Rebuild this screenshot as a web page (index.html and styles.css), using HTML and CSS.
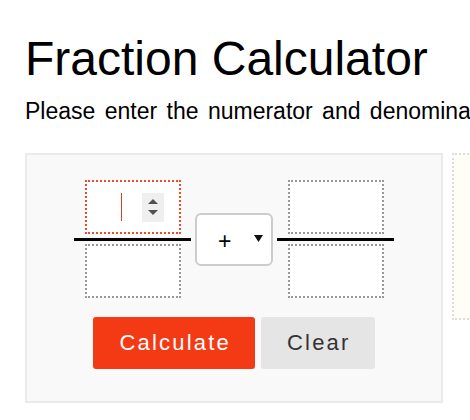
FILE: index.html
```html
<!DOCTYPE html>
<html>
<head>
<meta charset="utf-8">
<title>Fraction Calculator</title>
<link rel="stylesheet" href="styles.css">
</head>
<body>
<div class="page">
  <h1 class="title">Fraction Calculator</h1>
  <p class="intro">Please enter the numerator and denominator of each fraction.</p>
  <div class="layout">
    <div class="panel">
      <div class="equation">
        <div class="fraction">
          <div class="field field-active">
            <span class="caret"></span>
            <span class="spinner">
              <svg width="10" height="16" viewBox="0 0 10 16"><polygon points="5,0 10,5 0,5" fill="#505050"/><polygon points="0,11 10,11 5,16" fill="#505050"/></svg>
            </span>
          </div>
          <div class="bar"></div>
          <div class="field"></div>
        </div>
        <div class="operator">
          <span class="op-sign">+</span>
          <svg class="op-arrow" width="9" height="7" viewBox="0 0 9 7"><polygon points="0,0 9,0 4.5,7" fill="#111"/></svg>
        </div>
        <div class="fraction">
          <div class="field"></div>
          <div class="bar"></div>
          <div class="field"></div>
        </div>
      </div>
      <div class="actions">
        <button class="btn btn-primary">Calculate</button>
        <button class="btn btn-secondary">Clear</button>
      </div>
    </div>
    <div class="result"></div>
  </div>
</div>
</body>
</html>
```
FILE: styles.css
```css
html, body {
  margin: 0;
  padding: 0;
  background: #ffffff;
  overflow: hidden;
}

.page {
  padding: 31px 0 0 25px;
  font-family: "Liberation Sans", Arial, sans-serif;
  color: #000;
  white-space: nowrap;
}

.title {
  margin: 0;
  font-size: 48px;
  line-height: 56px;
  font-weight: normal;
}

.intro {
  margin: 11px 0 0 0;
  font-size: 23px;
  line-height: 26px;
  word-spacing: 3px;
}

.layout {
  margin-top: 29px;
  display: flex;
  align-items: flex-start;
  gap: 9px;
}

.panel {
  flex: none;
  width: 414px;
  height: 246px;
  box-sizing: content-box;
  background: #f9f9f9;
  border: 2px solid #ebebeb;
  padding: 0;
  display: flex;
  flex-direction: column;
  align-items: center;
}

.equation {
  margin-top: 25px;
  display: flex;
  align-items: center;
  gap: 4px;
}

.fraction {
  width: 117px;
  display: flex;
  flex-direction: column;
  align-items: center;
}

.field {
  width: 96px;
  height: 54px;
  box-sizing: border-box;
  border: 2px dotted #999;
  background: #fff;
}

.field-active {
  border-color: #f0482a;
  display: flex;
  align-items: center;
  justify-content: flex-end;
  padding-right: 15px;
}

.caret {
  width: 1px;
  height: 28px;
  background: #d4402f;
  margin-right: 20px;
}

.spinner {
  width: 22px;
  height: 29px;
  background: #efefef;
  display: flex;
  align-items: center;
  justify-content: center;
}

.spinner svg {
  display: block;
}

.bar {
  width: 117px;
  height: 3px;
  background: #000;
  margin: 4px 0 3px 0;
}

.operator {
  width: 78px;
  height: 53px;
  box-sizing: border-box;
  border: 2px solid #cccccc;
  border-radius: 6px;
  background: #fff;
  display: flex;
  align-items: center;
  padding: 0 8px 0 21px;
}

.op-sign {
  font-size: 23px;
  line-height: 23px;
  margin-top: 4px;
}

.op-arrow {
  display: block;
  margin-left: auto;
  margin-top: -2px;
}

.actions {
  margin-top: 19px;
  display: flex;
  gap: 6px;
}

.btn {
  height: 52px;
  border: none;
  border-radius: 3px;
  padding: 0 24px 0 26px;
  font-family: "Liberation Sans", Arial, sans-serif;
  font-size: 22px;
  letter-spacing: 2.2px;
  cursor: pointer;
}

.btn-primary {
  background: #f33a14;
  color: #fff;
}

.btn-secondary {
  background: #e5e5e5;
  color: #333;
}

.result {
  flex: none;
  width: 120px;
  height: 167px;
  box-sizing: border-box;
  border: 2px dotted #dddddd;
  background: #fefef6;
}
```
